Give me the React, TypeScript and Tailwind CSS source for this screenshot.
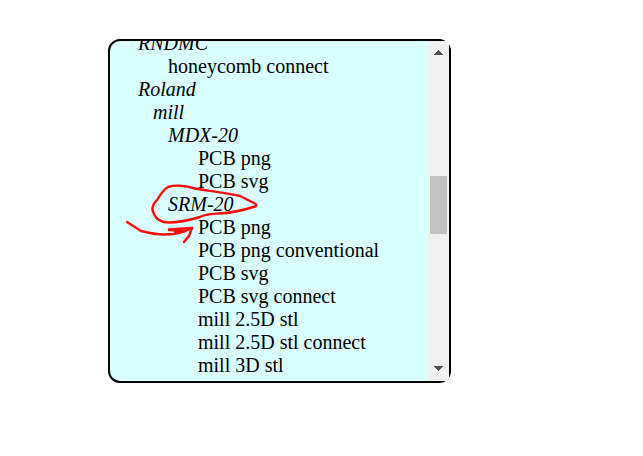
type Entry = { label: string; kind: "group" | "program"; indent: string };

const entries: Entry[] = [
  { label: "RNDMC", kind: "group", indent: "pl-[28px]" },
  { label: "honeycomb connect", kind: "program", indent: "pl-[58px]" },
  { label: "Roland", kind: "group", indent: "pl-[28px]" },
  { label: "mill", kind: "group", indent: "pl-[43px]" },
  { label: "MDX-20", kind: "group", indent: "pl-[58px]" },
  { label: "PCB png", kind: "program", indent: "pl-[88px]" },
  { label: "PCB svg", kind: "program", indent: "pl-[88px]" },
  { label: "SRM-20", kind: "group", indent: "pl-[58px]" },
  { label: "PCB png", kind: "program", indent: "pl-[88px]" },
  { label: "PCB png conventional", kind: "program", indent: "pl-[88px]" },
  { label: "PCB svg", kind: "program", indent: "pl-[88px]" },
  { label: "PCB svg connect", kind: "program", indent: "pl-[88px]" },
  { label: "mill 2.5D stl", kind: "program", indent: "pl-[88px]" },
  { label: "mill 2.5D stl connect", kind: "program", indent: "pl-[88px]" },
  { label: "mill 3D stl", kind: "program", indent: "pl-[88px]" },
];

function ProgramList() {
  return (
    <div className="min-w-0 flex-1 overflow-hidden rounded-l-[10px]">
      <ul className="-mt-[9px]">
        {entries.map((entry, i) => (
          <li key={i} className={`flex h-[23px] items-center ${entry.indent}`}>
            {entry.kind === "group" ? (
              <i>{entry.label}</i>
            ) : (
              <button type="button" className="cursor-pointer whitespace-nowrap">
                {entry.label}
              </button>
            )}
          </li>
        ))}
      </ul>
    </div>
  );
}

function ScrollBar() {
  return (
    <div className="flex w-[21px] shrink-0 flex-col items-center bg-[#f0f0f0]">
      <button type="button" aria-label="Scroll up" className="flex h-[23px] w-full items-center justify-center">
        <svg width="9" height="5" viewBox="0 0 9 5" fill="#505050" shapeRendering="crispEdges">
          <path d="M4 0h1v1h1v1h1v1h1v1h1v1H0V4h1V3h1V2h1V1h1z" />
        </svg>
      </button>
      <div className="flex w-full flex-1 flex-col items-center pt-[112px]">
        <div className="h-[58px] w-[17px] bg-[#c1c1c1]" />
      </div>
      <button type="button" aria-label="Scroll down" className="flex h-[25px] w-full items-center justify-center">
        <svg width="9" height="5" viewBox="0 0 9 5" fill="#505050" shapeRendering="crispEdges">
          <path d="M0 0h9v1H8v1H7v1H6v1H5v1H4V4H3V3H2V2H1V1H0z" />
        </svg>
      </button>
    </div>
  );
}

function Annotation() {
  return (
    <svg
      aria-hidden="true"
      className="pointer-events-none absolute top-[139px] left-[10px]"
      width="150"
      height="70"
      viewBox="120 180 150 70"
      fill="none"
      stroke="#ff0a0a"
      strokeWidth="2.4"
      strokeLinecap="round"
      strokeLinejoin="round"
    >
      <path d="M195 188.5C185 185 174 185 168 187C163 190 160 195 157 200C153 204 151 209 154 214C156 219 161 222.5 169 222.5C181 222.5 190 220 200 217C205 214 211 214 219 213.5C232 213 244 210 255 206.5C258 205 256 204 252 202L240 196C226 193 210 191 195 188.5Z" />
      <path d="M127 222L141 231C149 233 157 234.5 164 234.5L174 234L184 231.5" />
      <path d="M169 229.5L192 228L189 236L184 242" />
      <path d="M169 230L182 231L175 232L184 231.5L192 228" />
    </svg>
  );
}

export default function App() {
  return (
    <main className="min-h-screen bg-white pt-[39px] pr-[192px] pl-[108px] font-['Liberation_Serif','Times_New_Roman',serif] text-[20px] leading-[23px] text-black">
      <section
        aria-label="Programs"
        className="relative flex h-[344px] rounded-xl border-2 border-black bg-[#daffff]"
      >
        <ProgramList />
        <ScrollBar />
        <Annotation />
      </section>
    </main>
  );
}
